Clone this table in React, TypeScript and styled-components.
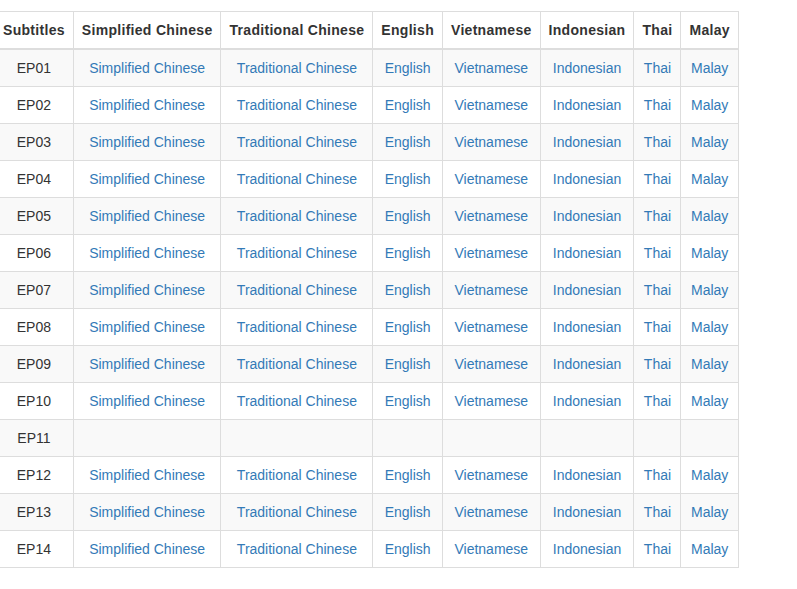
import React from 'react';
import styled, { createGlobalStyle } from 'styled-components';

const GlobalStyle = createGlobalStyle`
    html, body {
        margin: 0;
        padding: 0;
        background: #fff;
    }

    body {
        font-family: "Liberation Sans", Arial, Helvetica, sans-serif;
        font-size: 14px;
        line-height: 1.42857143;
        color: #333;
    }
`;

const languages = [
    'Simplified Chinese',
    'Traditional Chinese',
    'English',
    'Vietnamese',
    'Indonesian',
    'Thai',
    'Malay',
];

const episodes = Array.from({ length: 14 }, (_, i) => ({
    name: `EP${String(i + 1).padStart(2, '0')}`,
    available: i !== 10,
}));

const Wrapper = styled.div`
    padding-top: 11px;
    margin-left: -6px;
`;

const Table = styled.table`
    border-collapse: collapse;
    border-spacing: 0;
    border: 1px solid #ddd;
    background: transparent;
`;

const HeadCell = styled.th`
    padding: 8px;
    border: 1px solid #ddd;
    border-bottom: 2px solid #ddd;
    font-weight: bold;
    letter-spacing: 0.3px;
    text-align: center;
    vertical-align: bottom;
    white-space: nowrap;
`;

const Row = styled.tr<{ $striped: boolean }>`
    background-color: ${(p) => (p.$striped ? '#f9f9f9' : 'transparent')};
`;

const Cell = styled.td`
    padding: 8px;
    border: 1px solid #ddd;
    height: 20px;
    text-align: center;
    vertical-align: top;
    white-space: nowrap;
`;

const Link = styled.a`
    color: #337ab7;
    text-decoration: none;
`;

export default function App() {
    return (
        <>
            <GlobalStyle />
            <Wrapper>
                <Table>
                    <thead>
                        <tr>
                            <HeadCell>Subtitles</HeadCell>
                            {languages.map((lang) => (
                                <HeadCell key={lang}>{lang}</HeadCell>
                            ))}
                        </tr>
                    </thead>
                    <tbody>
                        {episodes.map((ep, i) => (
                            <Row key={ep.name} $striped={i % 2 === 0}>
                                <Cell>{ep.name}</Cell>
                                {languages.map((lang) => (
                                    <Cell key={lang}>{ep.available && <Link href="#">{lang}</Link>}</Cell>
                                ))}
                            </Row>
                        ))}
                    </tbody>
                </Table>
            </Wrapper>
        </>
    );
}
